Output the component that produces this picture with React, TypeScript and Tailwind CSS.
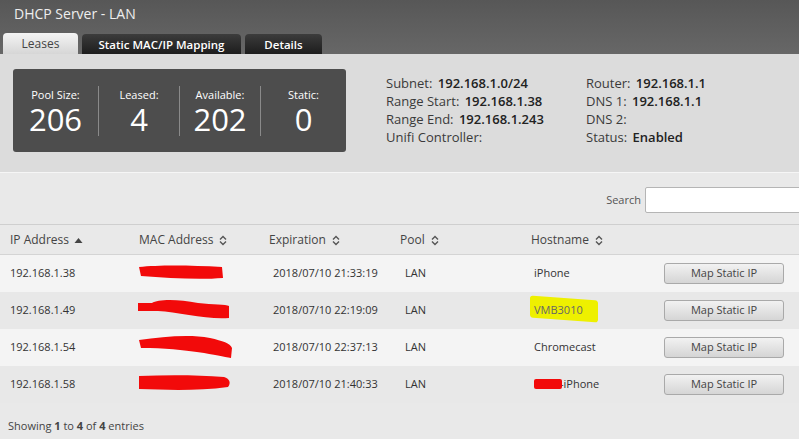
import React from "react";

const SortBoth = () => (
  <svg width="8" height="11" viewBox="0 0 8 11" className="ml-[6px] inline-block">
    <path d="M1 4.5 L4 1.5 L7 4.5" fill="none" stroke="#555" strokeWidth="1.4" />
    <path d="M1 6.5 L4 9.5 L7 6.5" fill="none" stroke="#555" strokeWidth="1.4" />
  </svg>
);

const SortUp = () => (
  <svg width="9" height="7" viewBox="0 0 9 7" className="ml-[5px] inline-block">
    <path d="M0.5 6 L4.5 1 L8.5 6 Z" fill="#444" />
  </svg>
);

const Scribble = ({ d, w, h }: { d: string; w: number; h: number }) => (
  <svg width={w} height={h} viewBox={`0 0 ${w} ${h}`} className="absolute left-0 top-0">
    <path d={d} fill="#f20a0a" />
  </svg>
);

type Row = {
  ip: string;
  exp: string;
  host: React.ReactNode;
  bg: string;
  scribble: React.ReactNode;
};

const rows: Row[] = [
  {
    ip: "192.168.1.38",
    exp: "2018/07/10 21:33:19",
    host: <span>iPhone</span>,
    bg: "bg-[#f4f4f4]",
    scribble: (
      <div className="relative w-[90px] h-[20px] -mt-[2px]">
        <Scribble w={90} h={20} d="M1 4 C20 2 50 2 84 4 L85 15 C60 17 30 15 3 13 Z" />
      </div>
    ),
  },
  {
    ip: "192.168.1.49",
    exp: "2018/07/10 22:19:09",
    host: (
      <span className="relative inline-block">
        <span className="absolute -left-[4px] -top-[4px] w-[68px] h-[22px] bg-[#eef000] rounded-[3px] [transform:skewY(4deg)]" />
        <span className="relative text-[#666]">VMB3010</span>
      </span>
    ),
    bg: "bg-[#e8e8e8]",
    scribble: (
      <div className="relative w-[95px] h-[24px] -mt-[2px]">
        <Scribble w={95} h={24} d="M0 5 L14 5 C20 1 40 1 60 5 C75 7 88 6 91 8 L91 20 C70 22 40 14 20 13 L0 13 Z" />
      </div>
    ),
  },
  {
    ip: "192.168.1.54",
    exp: "2018/07/10 22:37:13",
    host: <span>Chromecast</span>,
    bg: "bg-[#f4f4f4]",
    scribble: (
      <div className="relative w-[96px] h-[26px] -mt-[2px]">
        <Scribble w={96} h={26} d="M1 6 C25 3 50 0 72 4 C85 7 92 9 94 14 L93 24 C80 22 50 14 3 14 Z" />
      </div>
    ),
  },
  {
    ip: "192.168.1.58",
    exp: "2018/07/10 21:40:33",
    host: (
      <span className="relative inline-block">
        <span className="absolute left-0 top-[3px] w-[28px] h-[10px] bg-[#f20a0a] rounded-[2px]" />
        <span className="pl-[26px]">-iPhone</span>
      </span>
    ),
    bg: "bg-[#e8e8e8]",
    scribble: (
      <div className="relative w-[94px] h-[22px] -mt-[2px]">
        <Scribble w={94} h={22} d="M1 3 C30 2 60 2 86 4 C92 6 93 10 90 14 C60 18 30 17 1 16 Z" />
      </div>
    ),
  },
];

export default function App() {
  return (
    <div className="w-[799px] h-[439px] overflow-hidden bg-[#e9e9e9] font-['Open_Sans',sans-serif] text-[#333]">
      {/* Header */}
      <div className="h-[54px] bg-gradient-to-b from-[#575757] to-[#676767] flex flex-col">
        <div className="h-[33px] pl-[14px] pt-[4px] text-[14px] text-[#eeeeee] leading-[20px]">DHCP Server - LAN</div>
        <div className="flex items-end pl-[3px] gap-[4px] h-[21px]">
          <div className="w-[75px] h-[21px] rounded-t-[4px] bg-gradient-to-b from-[#f4f4f4] to-[#d6d6d6] text-[#444] text-[12px] flex items-center justify-center pt-[1px]">
            Leases
          </div>
          <div className="w-[159px] h-[20px] rounded-t-[4px] bg-gradient-to-b from-[#3c3c3c] to-[#1d1d1d] text-white font-semibold text-[11.5px] flex items-center justify-center pt-[1px]">
            Static MAC/IP Mapping
          </div>
          <div className="w-[77px] h-[20px] rounded-t-[4px] bg-gradient-to-b from-[#3c3c3c] to-[#1d1d1d] text-white font-semibold text-[11.5px] flex items-center justify-center pt-[1px]">
            Details
          </div>
        </div>
      </div>

      {/* Summary */}
      <div className="h-[119px] bg-[#dcdcdc] flex items-start pt-[15px] pl-[13px] border-b border-[#f6f6f6]">
        <div className="w-[333px] h-[83px] bg-[#4d4d4d] rounded-[3px] flex items-center text-white">
          {[
            { l: "Pool Size:", v: "206", w: "w-[85px]" },
            { l: "Leased:", v: "4", w: "w-[81px]" },
            { l: "Available:", v: "202", w: "w-[81px]" },
            { l: "Static:", v: "0", w: "w-[86px]" },
          ].map((s, i) => (
            <div key={s.l} className={`${s.w} h-[50px] flex flex-col items-center ${i > 0 ? "border-l border-[#8a8a8a]" : ""}`}>
              <div className="text-[11px] leading-[13px] mt-[2px]">{s.l}</div>
              <div className="text-[31px] leading-[30px] mt-[3px]">{s.v}</div>
            </div>
          ))}
        </div>
        <div className="ml-[40px] mt-[5px] grid grid-cols-[200px_200px] text-[13px] leading-[18px] text-[#3a3a3a]">
          <div>
            <div>Subnet: <b className="ml-[2px] font-semibold text-[#222]">192.168.1.0/24</b></div>
            <div>Range Start: <b className="ml-[2px] font-semibold text-[#222]">192.168.1.38</b></div>
            <div>Range End: <b className="ml-[2px] font-semibold text-[#222]">192.168.1.243</b></div>
            <div>Unifi Controller:</div>
          </div>
          <div>
            <div>Router: <b className="ml-[2px] font-semibold text-[#222]">192.168.1.1</b></div>
            <div>DNS 1: <b className="ml-[2px] font-semibold text-[#222]">192.168.1.1</b></div>
            <div>DNS 2:</div>
            <div>Status: <b className="ml-[2px] font-semibold text-[#222]">Enabled</b></div>
          </div>
        </div>
      </div>

      {/* Search */}
      <div className="h-[52px] flex items-center justify-end border-b border-[#cfcfcf] pt-[2px]">
        <span className="text-[11px] text-[#555] mr-[4px] pt-[2px]">Search</span>
        <div className="w-[160px] h-[26px] bg-white border border-[#b5b5b5] rounded-l-[2px] -mr-[6px]" />
      </div>

      {/* Table header */}
      <div className="h-[30px] flex items-center text-[12px] text-[#444] border-b border-[#d4d4d4] pt-[1px]">
        <div className="w-[129px] pl-[10px] flex items-center">IP Address<SortUp /></div>
        <div className="w-[130px] pl-[10px] flex items-center">MAC Address<SortBoth /></div>
        <div className="w-[131px] pl-[10px] flex items-center">Expiration<SortBoth /></div>
        <div className="w-[131px] pl-[10px] flex items-center">Pool<SortBoth /></div>
        <div className="pl-[10px] flex items-center">Hostname<SortBoth /></div>
      </div>

      {/* Rows */}
      {rows.map((r) => (
        <div key={r.ip} className={`h-[37px] flex items-center text-[11px] text-[#333] ${r.bg}`}>
          <div className="w-[129px] pl-[10px]">{r.ip}</div>
          <div className="w-[134px] pl-[9px] h-[20px] flex items-center">{r.scribble}</div>
          <div className="w-[132px] pl-[10px]">{r.exp}</div>
          <div className="w-[129px] pl-[10px]">LAN</div>
          <div className="w-[140px] pl-[10px] flex items-center">{r.host}</div>
          <button className="w-[120px] h-[21px] border border-[#a9a9a9] rounded-[3px] bg-gradient-to-b from-[#f2f2f2] to-[#d5d5d5] text-[11px] text-[#444]">
            Map Static IP
          </button>
        </div>
      ))}

      {/* Footer */}
      <div className="pt-[15px] pl-[8px] text-[11px] text-[#444]">
        Showing <b>1</b> to <b>4</b> of <b>4</b> entries
      </div>
    </div>
  );
}
